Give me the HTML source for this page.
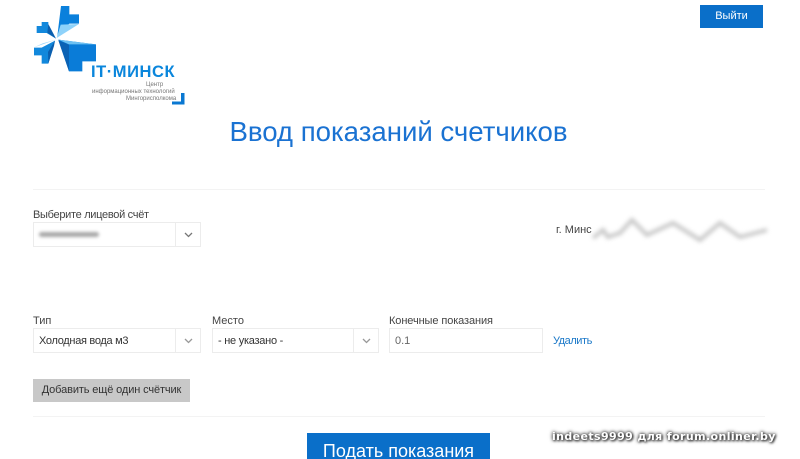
<!DOCTYPE html>
<html lang="ru">
<head>
<meta charset="utf-8">
<style>
html,body{margin:0;padding:0;background:#fff;}
body{width:800px;height:459px;position:relative;overflow:hidden;font-family:"Liberation Sans",sans-serif;color:#444;}
.a{position:absolute;white-space:nowrap;}
.lbl{font-size:11px;line-height:14px;color:#444;}
.box{position:absolute;box-sizing:border-box;border:1px solid #ececec;background:#fff;height:25px;font-size:11px;line-height:25px;padding-left:5px;color:#333;white-space:nowrap;}
.arr{position:absolute;top:0;right:0;width:24px;height:23px;border-left:1px solid #ececec;}
.arr svg{position:absolute;left:8px;top:9px;}
.hr{position:absolute;height:1px;background:#f3f3f3;left:33px;width:732px;}
.s{position:absolute;font-size:6px;line-height:7px;color:#777;white-space:nowrap;}
</style>
</head>
<body>
<svg class="a" style="left:0;top:0;filter:blur(.25px)" width="200" height="115" viewBox="0 0 200 115">
<g transform="translate(30 2) scale(.33333)">
<path d="M93 12H118V37H147V65H118L82 102Z" fill="#0a80dc"/>
<path d="M92 68L147 66L80 108Z" fill="#8ed2fa"/>
<path d="M20 72H35V60H55V85L78 110L50 93H20Z" fill="#1288dc"/>
<path d="M55 66L78 110L52 92Z" fill="#0b5faf"/>
<path d="M12 137H35L75 116L55 185H35V160H12Z" fill="#1288dc"/>
<path d="M75 116L72 132L55 185L54 150Z" fill="#0b5faf"/>
<path d="M12 136L78 113L38 124Z" fill="#9ad6fb"/>
<path d="M85 113L198 127V178H157V208H117Z" fill="#0a7cd8"/>
<path d="M85 115L117 128V208Z" fill="#0b62b4"/>
<path d="M85 113L198 127H117Z" fill="#6cc0f2"/>
</g>
<path d="M181 93H184.500V104.500H172V101.500H181Z" fill="#0a78d2"/>
</svg>
<div class="a" style="left:91px;top:64px;font-size:16.500px;line-height:17px;font-weight:bold;color:#0a86dc;letter-spacing:.55px;">IT·МИНСК</div>
<div class="s" style="left:146px;top:82px;">Центр</div>
<div class="s" style="left:92px;top:89px;">информационных технологий</div>
<div class="s" style="left:126px;top:96px;">Мингорисполкома</div>

<div class="a" style="left:700px;top:5px;width:63px;height:23px;background:#0a6fc9;color:#fff;font-size:11px;line-height:23px;text-align:center;">Выйти</div>

<div class="a" style="left:0;top:113px;width:797px;text-align:center;font-size:27.600px;line-height:38px;color:#1a72d2;">Ввод показаний счетчиков</div>

<div class="hr" style="top:189px;"></div>

<div class="a lbl" style="left:33px;top:208px;letter-spacing:-.3px;">Выберите лицевой счёт</div>
<div class="box" style="left:33px;top:222px;width:168px;">
<div class="a" style="left:5px;top:9px;width:60px;height:5px;background:#a8a8a8;border-radius:3px;filter:blur(1.6px);"></div>
<div class="arr"><svg width="9" height="6" viewBox="0 0 9 6"><path d="M1 1L4.500 4.500L8 1" fill="none" stroke="#777" stroke-width="1.300"/></svg></div>
</div>

<div class="a" style="left:556px;top:223px;font-size:11px;line-height:14px;color:#444;">г. Минс</div>
<svg class="a" style="left:590px;top:212px;filter:blur(2px)" width="185" height="34" viewBox="0 0 185 34">
<path d="M3 26L13 18L18 25L30 21L42 8L57 23L83 11L110 28L130 11L150 25L177 18" fill="none" stroke="#c8c8c8" stroke-width="4"/>
</svg>

<div class="a lbl" style="left:33px;top:314px;">Тип</div>
<div class="box" style="left:33px;top:328px;width:168px;letter-spacing:-.3px;">Холодная вода м3
<div class="arr"><svg width="9" height="6" viewBox="0 0 9 6"><path d="M1 1L4.500 4.500L8 1" fill="none" stroke="#999" stroke-width="1.300"/></svg></div>
</div>

<div class="a lbl" style="left:212px;top:314px;">Место</div>
<div class="box" style="left:212px;top:328px;width:167px;letter-spacing:-.25px;">- не указано -
<div class="arr"><svg width="9" height="6" viewBox="0 0 9 6"><path d="M1 1L4.500 4.500L8 1" fill="none" stroke="#999" stroke-width="1.300"/></svg></div>
</div>

<div class="a lbl" style="left:389px;top:314px;letter-spacing:-.1px;">Конечные показания</div>
<div class="box" style="left:389px;top:328px;width:154px;color:#666;">0.1</div>

<div class="a" style="left:553px;top:334px;font-size:11px;line-height:14px;color:#1a78c8;letter-spacing:-.45px;">Удалить</div>

<div class="a" style="left:33px;top:379px;width:157px;height:23px;background:#c8c8c8;color:#333;font-size:11px;line-height:23px;text-align:center;letter-spacing:-.12px;">Добавить ещё один счётчик</div>

<div class="hr" style="top:416px;"></div>

<div class="a" style="left:307px;top:433px;width:183px;height:26px;background:#0a6fc9;color:#fff;font-size:18px;line-height:36px;text-align:center;overflow:hidden;">Подать показания</div>

<div class="a" style="left:552px;top:430px;font-family:'DejaVu Sans',sans-serif;font-size:11px;font-weight:bold;line-height:14px;color:#fff;letter-spacing:.4px;text-shadow:0 0 3px #333,1px 1px 2px #333,0 0 4px #555;">indeets9999 для forum.onliner.by</div>
</body>
</html>
